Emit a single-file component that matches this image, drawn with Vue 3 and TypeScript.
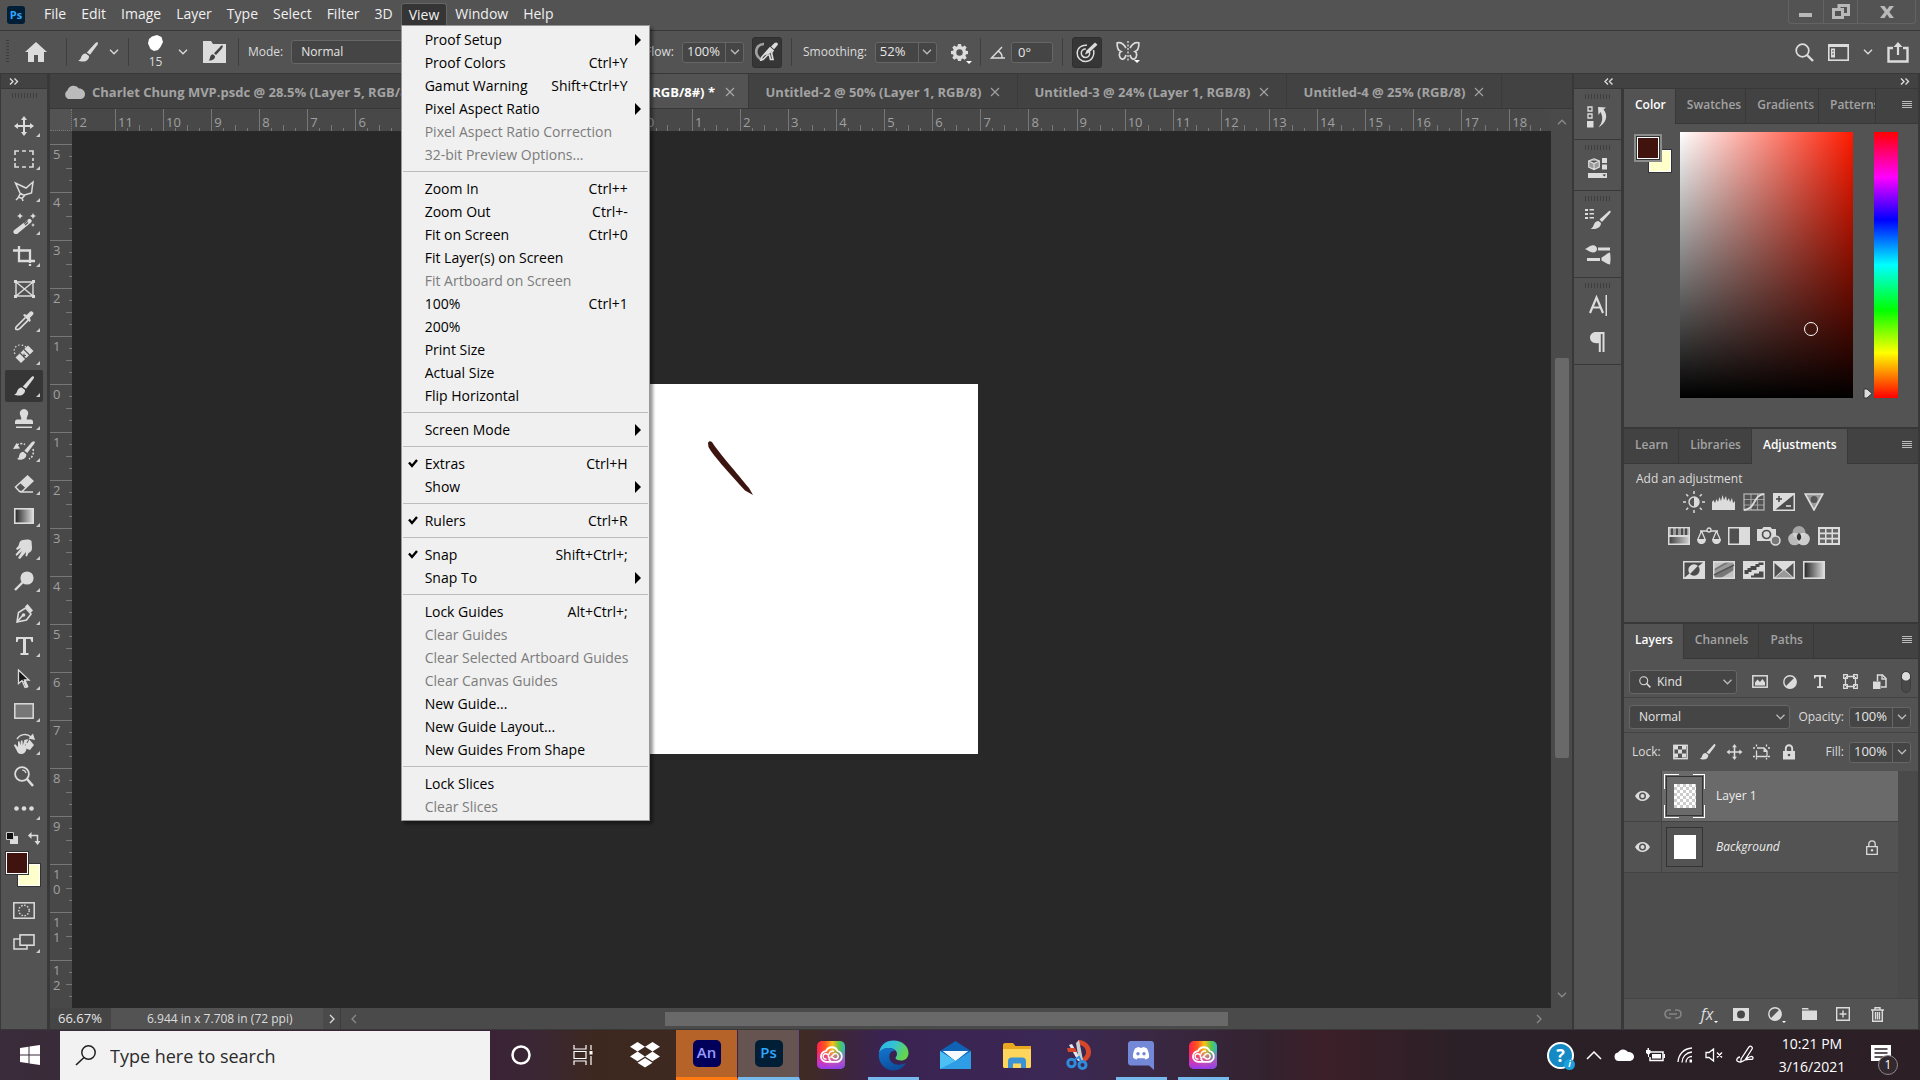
<script setup lang="ts">
import { h, ref } from 'vue'

type IconDef = [number, number, string]

const S = 'fill="none" stroke="currentColor"'

const icons: Record<string, IconDef> = {
  home: [22, 20, '<path d="M11 0L0 10h3v10h6v-7h4v7h6V10h3z"/>'],
  brush: [20, 20, '<path d="M19.500 .3c.8.6.5 1.600 0 2.400L12 12.800 8.800 10.500 17 1.500c.8-.9 1.700-1.700 2.500-1.200zM7.800 11.400l3.200 2.500c.3 3-2.200 5.600-6 5.600-2 0-3.700-.3-4.800-1 2-.6 2.400-1.800 3-3.500.7-2.200 2.400-3.700 4.600-3.600z"/>'],
  blob: [15, 16, '<path d="M4 1.500L9 0l4.500 2L15 7l-2.500 5L10 15l-4 1-3.500-2L0 8.500 1 4z"/>'],
  brushPanel: [23, 22, '<path d="M0 0h8l2 3h13v19H0z"/><path d="M19.500 4.500c.8.7 0 2-1 3.500l-5.500 6-2-1.700L17 6c.8-.9 1.900-2 2.500-1.500zM10 13.300l2 1.700c.3 2.500-1.500 4.500-6.500 4.500 1.500-1 1.200-2 1.700-3.700.4-1.500 1.500-2.500 2.800-2.500z" fill="#444"/>'],
  chev: [10, 6, `<path d="M1 .8l4 4 4-4" ${S} stroke-width="1.300"/>`],
  chevUp: [10, 6, `<path d="M1 5.200l4-4 4 4" ${S} stroke-width="1.300"/>`],
  chevLeft: [6, 10, `<path d="M5 1L1 5l4 4" ${S} stroke-width="1.300"/>`],
  chevRight: [6, 10, `<path d="M1 1l4 4-4 4" ${S} stroke-width="1.300"/>`],
  dblRight: [10, 7, `<path d="M1 .5l3 3-3 3M5.500.5l3 3-3 3" ${S} stroke-width="1.400"/>`],
  dblLeft: [10, 7, `<path d="M4 .5l-3 3 3 3M8.500.5l-3 3 3 3" ${S} stroke-width="1.400"/>`],
  airbrush: [24, 20, `<path d="M9 2C4 2 1.200 5.500 1.200 9.500S4 17 7 17.500" ${S} stroke-width="2.600" opacity=".65"/><path d="M21 .5c1.700 0 2.500 1.700 1.500 2.700l-3.500 4-3-2.700L19.500 1z"/><path d="M15 6l3 2.700-1.500 2L18 17.500h-2.500L14.500 13h-2l-4.500 4.500-2 .5 1-3z" ${S} stroke-width="1.700"/><path d="M14.500 6L9 13.500l6-2 2.500-3z"/>`],
  gear: [17, 17, '<path fill-rule="evenodd" d="M7 0h3l.5 2.300 1.200.5 2-1.300 2 2-1.300 2 .5 1.200L17 7v3l-2.100.5-.5 1.200 1.300 2-2 2-2-1.300-1.200.5L10 17H7l-.5-2.100-1.200-.5-2 1.300-2-2 1.300-2-.5-1.200L0 10V7l2.100-.3.5-1.200-1.300-2 2-2 2 1.300 1.200-.5zM8.500 5.300a3.200 3.200 0 100 6.400 3.200 3.200 0 000-6.400z"/>'],
  angle: [16, 13, `<path d="M15 12H1.500L12 1M8.500 5.500c2.500 1 3.700 3.500 3.500 6.500" ${S} stroke-width="1.400"/>`],
  target: [22, 21, `<path d="M17.500 8c1.500 6-2.500 11.500-8 11.500A8.300 8.300 0 011.200 11c0-5 4.500-8.500 9.800-7.700" ${S} stroke-width="1.500"/><path d="M13.500 10c.8 3-1 5.500-4 5.500A4.300 4.300 0 015.300 11c0-2.500 2-4.200 4.500-4" ${S} stroke-width="1.500"/><path d="M19 .5l2.500 2.300-8.500 8-4 1.700 1.500-4z"/>`],
  butterfly: [24, 22, `<path d="M10 7C7.500 2.500 4 1 1.200 1.800 1 6 2 9.500 5 10.500 2.500 12 3 16.500 5.500 18 8 19 9.500 16 10 14M14 7c2.500-4.500 6-6 8.800-5.200.2 4.200-.8 7.700-3.800 8.700 2.500 1.500 2 6-.5 7.500-2.500 1-4-2-4.500-4" ${S} stroke-width="1.700"/><path d="M12 0v21" stroke="currentColor" stroke-width="1.300" stroke-dasharray="2 1.500"/><path d="M18 19h6l-3 3z" fill="#fff"/>`],
  search: [19, 19, `<circle cx="7.500" cy="7.500" r="6.300" ${S} stroke-width="1.700"/><path d="M12 12l6 6" stroke="currentColor" stroke-width="2.400"/>`],
  workspace: [21, 17, `<rect x=".8" y=".8" width="19.400" height="15.400" ${S} stroke-width="1.600"/><path d="M0 0h21v3H0z"/><path d="M3 4.500h4v9H3z"/><path d="M4 7h2M4 10h2" stroke="#535353"/>`],
  share: [22, 21, `<path d="M6 6H1.500v13.500h19V6H16" ${S} stroke-width="2.400"/><path d="M11 13V3" stroke="currentColor" stroke-width="2.200"/><path d="M11 0l4.500 5h-9z"/>`],
  min: [14, 14, '<path d="M0 8h13v4H0z"/>'],
  restore: [18, 15, `<path d="M1.500 5.500h9v8h-9z" ${S} stroke-width="3"/><path d="M7 4V1.500h9.500v9H12" ${S} stroke-width="3"/>`],
  close: [14, 12, '<path d="M0 0h4.500L7 3.500 9.500 0H14L9.300 6 14 12H9.500L7 8.300 4.500 12H0l4.700-6z"/>'],
  x: [10, 10, `<path d="M1 1l8 8M9 1L1 9" ${S} stroke-width="1.100"/>`],
  cloud: [22, 14, '<path d="M5 14a5 5 0 01-.5-8.800A6.500 6.500 0 0116 3.500c3.500 0 6 2.500 6 5.500s-2 5-5 5z"/>'],
  lines: [10, 8, '<path d="M0 0h10v1H0zM0 2h10v1H0zM0 4h10v1H0zM0 6h10v1H0z"/>'],
  move: [20, 20, '<path d="M10 0l3 4h-2v5h5V7l4 3-4 3v-2h-5v5h2l-3 4-3-4h2v-5H4v2l-4-3 4-3v2h5V4H7z"/>'],
  marquee: [20, 18, `<path d="M1 5V1h4M8 1h4M15 1h4v4M19 8v3M19 13v4h-4M12 17H8M5 17H1v-4M1 11V8" ${S} stroke-width="1.600"/>`],
  lasso: [20, 22, `<path d="M6 13L1.500 3 12 8l7-6-1.500 11-7 2M6.500 13.500l4 2-2.500 3-3.500-1.500zM5 17l-3 3M8 18l1 3" ${S} stroke-width="1.500"/>`],
  wand: [23, 21, `<path d="M15 6.500a2 2 0 013 3L5 20.300a2 2 0 01-4-3z"/><path d="M11 10.500l3.500-3M12 12l3-2.500" stroke="#535353" stroke-width="1.200"/><path d="M7 0l1 2 2 1-2 1-1 2-1-2-2-1 2-1zM20 0l1 2 2 1-2 1-1 2-1-2-2-1 2-1zM20 10l.7 1.500L22 12l-1.300.6L20 14l-.7-1.400L18 12l1.300-.5z"/>`],
  crop: [23, 20, `<path d="M0 4.500h17V17M6 0v15h16M17 18v2" ${S} stroke-width="2.300"/>`],
  frame: [21, 18, `<path d="M2 2h17v14H2zM2 2l17 14M19 2L2 16" ${S} stroke-width="1.400"/><path d="M0 0h3v3H0zM18 0h3v3h-3zM0 15h3v3H0zM18 15h3v3h-3z"/>`],
  eyedrop: [20, 20, `<path d="M11.500 6.500L2.500 15.500c-1.200 1.200-1 3 0 3s2 .3 3.200-.8l8.500-8.500" ${S} stroke-width="1.700"/><path d="M9 4l1.500-1 2 1L16 .8c2-1.500 4.500 1 3 3L15.800 7l1 2.500L15.500 11z"/>`],
  heal: [22, 20, `<path d="M15 1.500l5.500 5.500L8 19l-5.500-5.500z"/><path d="M7 9l6 6M11 5.500l5.500 5.500" stroke="#535353" stroke-width="1.200"/><path d="M9 11.500h4M11 9.500v4" stroke="#535353"/><path d="M2 10C-.5 5 3 1 7 1s5 1 6 2.500" ${S} stroke-width="1.200" stroke-dasharray="1.500 2"/>`],
  stamp: [18, 20, '<path d="M9 0a4.200 4.200 0 014 5.500c-.7 2-1.300 3-1.300 5H16c1 0 2 1 2 2V15H0v-2.500c0-1 1-2 2-2h4.300c0-2-.6-3-1.300-5A4.200 4.200 0 019 0zM1 17.500h16V19H1z"/>'],
  history: [22, 20, `<path d="M21.500.5c.7.7 0 2-1 3.300L14.300 12l-3-2.200L18 2c1-1.200 2.700-2.200 3.500-1.500zM10.300 10.800l3 2.400c.3 3-2 5.500-6.300 5.500-1 0-2.300-.2-3-.7 2-.7 1.800-2 2.300-3.700.5-2 2-3.500 4-3.500zM0 8l3.500-6L7 7.500z"/><path d="M4 4c3-2 6-1.500 8-.5M20 8c1 4 0 8-4 10" ${S} stroke-width="1.500" stroke-dasharray="2 1.500"/>`],
  eraser: [20, 18, `<path d="M13.500 1L19 6 12 12.500 6.500 7.500z"/><path d="M13.500 1L1.500 12 5.500 16.500H8L19 6zM6.500 7.500l5.500 5M6 17h13" ${S} stroke-width="1.500"/>`],
  gradient: [20, 16, '<defs><linearGradient id="gt"><stop stop-color="#222"/><stop offset="1" stop-color="#ddd"/></linearGradient></defs><rect x=".8" y=".8" width="18.400" height="14.400" fill="url(#gt)" stroke="currentColor" stroke-width="1.600"/>'],
  smudge: [18, 20, '<path d="M8 1c3-1 8-.8 8.500 1L17 9c0 3-1.500 4-3.500 5L12 17.500l-1.500-.5.5-4L5 20l-2-1 4-7-5.500 5L.5 15.500 6 9l-4 2-1-1.500C3 8 4 6 4.500 3.500 5 2 6.500 1.300 8 1z"/>'],
  dodge: [20, 20, `<circle cx="13" cy="7" r="6.600"/><path d="M9 11l-8 8" stroke="currentColor" stroke-width="2.400"/>`],
  pen: [18, 20, `<path d="M2 18L3.500 8.500 10.500 4 16 10l-4.500 6zM2 18l6-7" ${S} stroke-width="1.600"/><circle cx="8.500" cy="11" r="1.800"/><path d="M10 2.500L12.500 0 18 6.500 15.500 9z"/>`],
  type: [17, 18, '<path d="M0 0h17v5h-1.500L14.500 2H10v14h2.500v2h-8v-2H7V2H2.500l-1 3H0z"/>'],
  select: [14, 20, '<path d="M1.500 1v13.500l3.500-3 3 7 2.500-1-3-6.500H12z" fill="#151515" stroke="currentColor" stroke-width="1.300"/><path d="M6 12l3 7 2.500-1-3-7z"/>'],
  rect: [20, 16, '<rect x=".8" y=".8" width="18.400" height="14.400" fill="#777" stroke="currentColor" stroke-width="1.500"/>'],
  rotate: [21, 21, `<path d="M3 6C6 1 13 0 17 4" ${S} stroke-width="1.500"/><path d="M14.500 5.500L21 7 19 .5z"/><path d="M10 7l5-1 5 6-4 5-3-1zM1 11l3 3V8.500l1.500-.3.8 4L7 7.500h1.500l.3 5L10 8.300l1.300.5L11 13l1.500-2 1.300.5L12.500 16c-1 4-3 5-5.500 5s-3.500-1.500-4.500-4L0 12.500z"/><path d="M15 6l-2 4" stroke="#535353"/>`],
  zoom: [20, 21, `<circle cx="8" cy="8" r="6.900" ${S} stroke-width="1.800"/><path d="M8 4a4 4 0 014 3" ${S} stroke-width="1.200"/><path d="M13 13l6 7" stroke="currentColor" stroke-width="2.600"/>`],
  dots: [20, 5, '<circle cx="2.500" cy="2.500" r="2.300"/><circle cx="10" cy="2.500" r="2.300"/><circle cx="17.500" cy="2.500" r="2.300"/>'],
  defaults: [12, 12, '<path d="M4 4h8v8H4z" /><path d="M.5.500h7v7h-7z" fill="#111" stroke="#ccc"/>'],
  swap: [12, 13, `<path d="M2 3.500h7.500V11" ${S} stroke-width="1.500"/><path d="M3.500 0v7L0 3.500zM6.500 9h6l-3 4z"/>`],
  quickmask: [22, 17, `<rect x=".8" y=".8" width="20.400" height="15.400" ${S} stroke-width="1.500"/><circle cx="11" cy="8.500" r="5.200" ${S} stroke-width="1.400" stroke-dasharray="1.500 1.500"/>`],
  screen: [22, 16, `<path d="M7 5H1v10h13v-4" ${S} stroke-width="1.500"/><rect x="7" y=".9" width="14" height="10.300" ${S} stroke-width="1.600"/>`],
  hist: [22, 22, `<path d="M1 1h4v4H1zM1 8h4v4H1z" ${S} stroke-width="1.300"/><path d="M0 15h6.500v6.500H0zM11 1l8 .5-2.500 2c5 6 3 13-5 18 4-5 5-10 2-15.500L11.500 9z"/>`],
  cube: [20, 21, `<path d="M6 .8l5.300 2.200v6L6 11.500.7 9V3zM.7 3L6 5.500 11.300 3M6 5.500v6" fill="#999" stroke="currentColor" stroke-width="1.200"/><path d="M14 0h5v5h-5zM14 6.500h5v5h-5zM0 15h19v5H0z"/><path d="M14.500 16.500h3.500L16.300 18.500z" fill="#333"/>`],
  brushList: [26, 22, '<path d="M0 1h3v2H0zM4.500 1H9v1.500H4.500zM0 5h3v2H0zM4.500 5H9v1.500H4.500zM0 9h3v2H0zM4.500 9H9v1.500H4.500zM25.500 3c.5.700-.2 2-1.200 3L17 14l-2.500-2.500L23 4c.8-.7 2-1.500 2.500-1zM13.500 13l2.500 2c0 4-3.500 6.500-10.500 6 2.500-1.200 2.500-2.800 3.500-4.800 1-2 2.500-3.200 4.500-3.200z"/>'],
  brushSet: [26, 20, '<path d="M0 4C3 3 5 0 8 .2c2.500 0 4 1.800 4 3.800S10.500 7.500 8 7.500C5 7.500 3 5 0 4zM13 2.500h12v3H13zM2 13h13v3H2zM25 7.500c.7 4 .7 8 0 12-3-.3-5-2.500-8.500-4v-3C20 11 22 8 25 7.500z"/>'],
  char: [18, 22, `<path d="M1 18L7.500 2.500 14 18M3.500 12.500h8" ${S} stroke-width="2.200"/><path d="M16.500 0h1.500v21h-1.500z"/>`],
  para: [15, 20, '<path d="M14.500 0v20h-2V2h-1.700v18h-2V11C3 12 0 9 0 5.500S3 0 6.500 0z"/>'],
  bright: [22, 22, `<circle cx="11" cy="11" r="5" ${S} stroke-width="1.400"/><path d="M11 6a5 5 0 010 10z"/><path d="M11 0v3M11 19v3M0 11h3M19 11h3M3.200 3.200l2 2M16.800 16.800l2 2M3.200 18.800l2-2M16.800 5.200l2-2" stroke="currentColor" stroke-width="1.500"/>`],
  levels: [23, 15, '<path d="M0 15V7l1.500-2L3 8l1.500-4L6 7l1.500-5L9 6l1.500-6L12 5l2-4 1 5 2-3 1 4 2-4 1 5 2-2v9z"/>'],
  curves: [22, 18, `<rect x="1" y="1" width="20" height="16" ${S} stroke-width="1.500" opacity=".6"/><path d="M8 1v16M14.500 1v16M1 6.500h20M1 12h20" stroke="currentColor" stroke-width="1.200" opacity=".55"/><path d="M1 17C13 16 10 2 21 1" ${S} stroke-width="1.800"/>`],
  exposure: [22, 18, `<path d="M0 0h22v18H0z"/><path d="M20.500 2v14.500h-18z" fill="#4c4c4c"/><path d="M3 6h6M6 3v6" stroke="#444" stroke-width="1.500"/><path d="M13 13h5" stroke="currentColor" stroke-width="1.600"/>`],
  vibrance: [20, 18, `<path d="M1.200 1h17.600L10 17z" fill="#9a9a9a" stroke="currentColor" stroke-width="1.600"/><circle cx="10" cy="6.500" r="3.500" fill="#555"/>`],
  hue: [22, 18, '<defs><linearGradient id="hg"><stop stop-color="#444"/><stop offset="1" stop-color="#ccc"/></linearGradient></defs><path d="M0 0h22v18H0z"/><path d="M1.500 1.500h19V8h-19z" fill="#999"/><path d="M3 1.500h2V8H3zM8 1.500h2V8H8zM13 1.500h2V8h-2zM17 1.500h2V8h-2z" fill="#4a4a4a"/><path d="M1.500 10h19v6.500h-19z" fill="url(#hg)"/>'],
  balance: [24, 18, `<circle cx="12" cy="3" r="2" ${S} stroke-width="1.300"/><path d="M3 4h7M14 4h7M4.500 4L1 12M4.500 4L8 12M19.500 4L16 12M19.500 4L23 12" ${S} stroke-width="1.300"/><path d="M0 12h9c0 3-2 5-4.500 5S0 15 0 12zM15 12h9c0 3-2 5-4.500 5S15 15 15 12z"/>`],
  bw: [22, 18, '<path d="M0 0h22v18H0z"/><path d="M1.500 1.500H11v15H1.500z" fill="#505050"/>'],
  photo: [24, 20, `<path d="M0 3h5l1.500-2h7L15 3h4v9.500L15 15H0z"/><circle cx="9.500" cy="8.500" r="4" fill="none" stroke="#505050" stroke-width="1.700"/><circle cx="18.500" cy="14.500" r="4.500" fill="#777" stroke="currentColor" stroke-width="1.500"/>`],
  mixer: [22, 20, '<circle cx="11" cy="6.500" r="6.500" opacity=".6"/><circle cx="6.500" cy="13" r="6.300" opacity=".75"/><circle cx="15.500" cy="13" r="6.300" opacity=".9"/><path d="M11 7c2 1.500 2.500 3 2 5.500L11 15l-2-2.500C8.500 10 9 8.500 11 7z" fill="#333"/>'],
  lookup: [22, 18, '<path d="M0 0h22v18H0z"/><path d="M2 2h5v3.500H2zM8.500 2h5v3.500h-5zM15 2h5v3.500h-5zM2 7.200h5v3.500H2zM8.500 7.200h5v3.500h-5zM15 7.200h5v3.500h-5zM2 12.500h5V16H2zM8.500 12.500h5V16h-5zM15 12.500h5V16h-5z" fill="#666"/>'],
  invert: [22, 18, '<path d="M0 0h22v18H0z"/><path d="M1.500 1.500H20L1.500 16.500z" fill="#4c4c4c"/><path d="M7 13A5.500 5.500 0 0115 5z"/><path d="M7 13a5.500 5.500 0 008-8z" fill="#4c4c4c"/>'],
  poster: [22, 18, `<rect x=".8" y=".8" width="20.400" height="16.400" fill="#777" stroke="currentColor" stroke-width="1.600"/><path d="M1 10L17 1h4v3L1 15z" opacity=".35"/><path d="M1 8L13 1H1zM8 17l13-8v8z" opacity=".75"/><path d="M1 14L21 4" stroke="#555" stroke-width="1.500"/>`],
  threshold: [22, 18, '<path d="M0 0h22v18H0z"/><path d="M1.500 9h3V7h3V5h5V3h3V1.500h5V4h-4v2h-3v3h-5v2h-3v2h-4zM8 16.500v-2h3v-2h5v-2h4.500v6z" fill="#484848"/>'],
  selective: [22, 18, '<path d="M0 0h22v18H0z"/><path d="M1.500 2v14.500L9.500 9zM20.500 2v14.500L12.500 9z" fill="#505050"/><path d="M2.500 16.500L11 9l8.500 7.500z" fill="#999"/>'],
  gmap: [22, 18, '<rect x=".8" y=".8" width="20.400" height="16.400" fill="url(#gt)" stroke="currentColor" stroke-width="1.600"/>'],
  fImage: [16, 13, `<rect x=".8" y=".8" width="14.400" height="11.400" ${S} stroke-width="1.500"/><path d="M3 10.500v-3l2.500-3L8 7l2.500-3L13 7.500v3z"/>`],
  fAdj: [14, 14, `<circle cx="7" cy="7" r="6.200" ${S} stroke-width="1.400"/><path d="M11.500 2.500A6.300 6.300 0 012.500 11.500z"/>`],
  fType: [12, 13, '<path d="M0 0h12v3.500h-1L10 1.700H7v9.600h2V13H3v-1.700h2V1.700H2L1 3.500H0z"/>'],
  fShape: [15, 15, `<path d="M3 2.500h9M3 12.500h9M2.500 3v9M12.500 3v9" ${S} stroke-width="1.300"/><path d="M.7.7h3.600v3.600H.7zM10.700.7h3.600v3.600h-3.600zM.7 10.700h3.600v3.600H.7zM10.700 10.700h3.600v3.600h-3.600z" ${S} stroke-width="1.300"/>`],
  fSmart: [14, 15, `<path d="M4.500 7V1h5L13 4.500V13H8" ${S} stroke-width="1.500"/><path d="M9 1v4h4" ${S} stroke-width="1.300"/><path d="M0 7.500h7.500V15H0z"/>`],
  lPix: [15, 15, `<rect x=".8" y=".8" width="13.400" height="13.400" ${S} stroke-width="1.400"/><path d="M1 1h4v4H1zM9 1h4v4H9zM5 5h4v4H5zM1 9h4v4H1zM9 9h4v4H9z"/>`],
  lArt: [17, 15, `<path d="M3.500 0v2M0 3.500h2M4 3.500h7l3 3V12H3.500V6M3.500 13v2M0 12h2M13.500 13.500V15M15 12h2M15 3.500h2M13.500 0v2" ${S} stroke-width="1.300"/><path d="M10.500 3.500v4h4z"/>`],
  lock: [12, 15, `<path d="M0 6.500h12V15H0z"/><path d="M2.800 7V4a3.200 3.200 0 016.400 0v3" ${S} stroke-width="1.900"/><circle cx="6" cy="10.500" r="1.300" fill="#535353"/>`],
  lockO: [12, 15, `<path d="M.7 6.700h10.600v7.600H.7zM2.800 6.700V4a3.200 3.200 0 016.400 0v2.700" ${S} stroke-width="1.300"/><circle cx="6" cy="10.300" r="1.200"/>`],
  eye: [15, 10, '<path fill-rule="evenodd" d="M0 5c2-3.300 4.500-5 7.500-5S13 1.700 15 5c-2 3.300-4.500 5-7.500 5S2 8.300 0 5zm7.500-3.500a3.500 3.500 0 100 7 3.500 3.500 0 000-7z"/><circle cx="7.500" cy="5" r="2"/>'],
  link: [18, 10, `<path d="M7 9H5a4 4 0 010-8h2M11 1h2a4 4 0 010 8h-2M5 5h8" ${S} stroke-width="1.700"/>`],
  mask: [16, 13, '<path d="M0 0h16v13H0z"/><circle cx="8" cy="6.500" r="4" fill="#484848"/>'],
  folder: [15, 12, '<path d="M0 0h6l1 1.500H0zM0 2.500h15V12H0z"/>'],
  plus: [14, 14, `<path d="M.7.7h12.600v12.600H.7zM7 3.500v7M3.500 7h7" ${S} stroke-width="1.400"/>`],
  trash: [13, 15, `<path d="M0 3h13M4 2.500V.7h5v1.800M1.700 3v11.300h9.600V3M4.500 5v7.500M6.500 5v7.500M8.500 5v7.500" ${S} stroke-width="1.400"/>`],
  win: [20, 20, '<path d="M0 3l8.500-1.200v7.700H0zM9.500 1.600L20 0v9.500H9.500zM0 10.500h8.500v7.700L0 17zM9.500 10.500H20V20L9.500 18.400z"/>'],
  mag: [22, 21, `<circle cx="13.500" cy="7.500" r="6.700" ${S} stroke-width="1.500"/><path d="M9 12.500L1 20" ${S} stroke-width="1.700"/>`],
  ring: [20, 20, `<circle cx="10" cy="10" r="8.500" ${S} stroke-width="2.500"/>`],
  taskview: [21, 20, `<path d="M1 0v4h12V0M1 20v-4h12v4M1 6.500h12v7H1zM18 0v5M18 11v9" ${S} stroke-width="1.200"/><path d="M16.500 6h3v3.500h-3z"/>`],
  dropbox: [30, 26, '<path d="M7.500 0L15 4.800 7.500 9.600 0 4.800zM22.500 0L30 4.800l-7.500 4.800L15 4.800zM7.500 9.600L15 14.400 7.500 19.200 0 14.400zM22.500 9.600l7.500 4.800-7.500 4.800-7.500-4.800zM7.500 20.700L15 16l7.500 4.700L15 25.500z"/>'],
  cc: [28, 28, '<defs><linearGradient id="cca"><stop stop-color="#ff1f4e"/><stop offset=".3" stop-color="#ff5a1e"/><stop offset=".55" stop-color="#fbc01c"/><stop offset=".8" stop-color="#57c94c"/><stop offset="1" stop-color="#2fb5c8"/></linearGradient><linearGradient id="ccb" x1="0" y1="0" x2="0" y2="1"><stop offset=".3" stop-color="#d62ad0" stop-opacity="0"/><stop offset=".75" stop-color="#c436d8" stop-opacity=".8"/><stop offset="1" stop-color="#8f3df0"/></linearGradient></defs><rect width="28" height="28" rx="5" fill="url(#cca)"/><rect width="28" height="28" rx="5" fill="url(#ccb)"/><path d="M18 20.800H9.500A5.300 5.300 0 019 10.200 6.300 6.300 0 0120.600 10 5.500 5.500 0 0118 20.800z" fill="none" stroke="#fff" stroke-width="1.800"/><path d="M13 17.500l-1.500-1.800a2.700 2.700 0 10-2 2.300M12 13.500a3.500 3.500 0 015-3.200M14 20.500l-2.500-3M13.500 16.500l3-3a2.700 2.700 0 112 4.500c-1.500 0-2.500-1-3.500-2" fill="none" stroke="#fff" stroke-width="1.500"/>'],
  edge: [31, 31, '<defs><linearGradient id="ea" x1="0" y1="0" x2="1" y2=".4"><stop stop-color="#2ab5ea"/><stop offset=".5" stop-color="#35c1d8"/><stop offset="1" stop-color="#63d64c"/></linearGradient><linearGradient id="eb" x1="0" y1="0" x2=".4" y2="1"><stop stop-color="#1277cf"/><stop offset="1" stop-color="#0d4f9e"/></linearGradient></defs><path d="M1 13C2 5 8 .5 15.500.5 24 .5 30.500 6 30.500 13c0 5-3.500 7.500-7.500 7.500-3 0-5.500-1-5.500-2.500 0-1 1.500-1.500 1.500-4 0-3.500-3.500-6-8-6S2.500 10 1 13z" fill="url(#ea)"/><path d="M1 13c2-4 6-5 10-5 3 0 5 1 6.500 2.500-6 0-7.500 6-5 10.500C15 25 21 26 28 23c-2.500 4.500-7 7.500-12.500 7.500C7 30.500-.5 22.500 1 13z" fill="url(#eb)"/>'],
  mail: [31, 28, '<path d="M15.500 0L31 10v18H0V10z" fill="#0f62b4"/><path d="M3 10h25L15.500 20z" fill="#f4f9fd"/><path d="M0 10l15.500 10L31 10v18H0z" fill="#2f9de6"/><path d="M0 10l15.500 10L0 28z" fill="#4cc0f5"/><path d="M3 10h25L15.500 19.500z" fill="#f4f9fd"/>'],
  files: [28, 25, '<path d="M0 2c0-1 .7-2 2-2h8l2.500 3H28v20H0z" fill="#e9a820"/><path d="M0 6h28v17.500c0 .8-.7 1.500-1.500 1.500h-25C.7 25 0 24.300 0 23.500z" fill="#ffd65c"/><path d="M5 25v-7c0-2 1.500-3.500 3.500-3.500h11c2 0 3.500 1.500 3.500 3.500v7h-5v-4.500h-8V25z" fill="#3b92d4"/>'],
  snip: [26, 30, '<path d="M12 0c8 0 13 6 13 12s-5 11-11 11l-1-4c4 0 7-3 7-7s-3-7-7-7z" fill="#d9472b"/><path d="M13 0l4 20-4 1-3-18z" fill="#c9ced3"/><path d="M3 5l3-1 9 16-3 1z" fill="#e6e9ec"/><path d="M1 8h8l2 4H2z" fill="#d9472b"/><circle cx="5.500" cy="23" r="3.700" fill="none" stroke="#2f8bdc" stroke-width="3"/><circle cx="16.500" cy="25" r="3.500" fill="none" stroke="#2f8bdc" stroke-width="3"/><path d="M8 20l5-3 2 4" fill="none" stroke="#2f8bdc" stroke-width="2"/>'],
  discord: [26, 29, '<path d="M3 0h20c1.700 0 3 1.300 3 3v26l-5-4.500H3c-1.700 0-3-1.300-3-3V3c0-1.700 1.300-3 3-3z" fill="#7488d8"/><path d="M7 7.500c2-1.500 4-1.500 4-1.500l.5.700h3L15 6s2 0 4 1.500c1.500 3 2.300 6 2 9-1.500 1.500-3.500 2-3.500 2l-1-1.300h-7l-1 1.300s-2-.5-3.500-2c-.3-3 .5-6 2-9z" fill="#fff"/><circle cx="10" cy="12.800" r="1.700" fill="#7488d8"/><circle cx="16" cy="12.800" r="1.700" fill="#7488d8"/>'],
  tUp: [16, 9, `<path d="M1 8l7-7 7 7" ${S} stroke-width="1.500"/>`],
  tCloud: [20, 12, '<path d="M4.500 12a4.300 4.300 0 01-.5-8.500A6 6 0 0114 3c3.500 0 6 2 6 4.800S17.500 12 15.500 12z"/>'],
  tBatt: [19, 14, `<path d="M4 4h13v8.500H4V9" ${S} stroke-width="1.500"/><path d="M6 6h9v4.500H6zM17.500 6H19v4h-1.500zM0 2h1.500V0H3v2h1.500v3L3 6.500V9H2V6.500L0 5z"/>`],
  tWifi: [16, 16, `<path d="M1 15C1.500 7 7 1.500 15 1M5 15.500C5 10 9 5.500 15 5M9 15.500c0-3.500 2.500-6 6-6" ${S} stroke-width="1.300"/><path d="M12.500 12.500H15V15.500h-2.500z"/>`],
  tVol: [19, 14, `<path d="M1 4.500h3L8.500 1v12L4 9.500H1zM12 4.500l5 5M17 4.500l-5 5" ${S} stroke-width="1.300"/>`],
  tPen: [19, 20, `<path d="M5 14L13 2c1.500-2 4 0 3 2L9 15l-4 2zM9 15c3-3 8-5 8-2s-5 0-7 2M5 17c-3 0-5-1-4-3s3-2 3-2" ${S} stroke-width="1.300"/>`],
  note: [22, 20, '<path d="M0 0h20v16h-7l-4 4v-4H0z"/><path d="M3.500 4h13M3.500 8h13M3.500 12h9" stroke="#2a1f26" stroke-width="1.500"/>'],
}

const Ico = (props: { name: string }) => {
  const [w, ht, body] = icons[props.name]
  return h('svg', {
    width: w,
    height: ht,
    viewBox: `0 0 ${w} ${ht}`,
    fill: 'currentColor',
    'aria-hidden': 'true',
    innerHTML: body,
  })
}
Ico.props = ['name']

const menusBefore = ['File', 'Edit', 'Image', 'Layer', 'Type', 'Select', 'Filter', '3D']
const menusAfter = ['Window', 'Help']

interface Item { label: string; key?: string; sub?: boolean; off?: boolean; on?: boolean }

const viewMenu: Item[][] = [
  [
    { label: 'Proof Setup', sub: true },
    { label: 'Proof Colors', key: 'Ctrl+Y' },
    { label: 'Gamut Warning', key: 'Shift+Ctrl+Y' },
    { label: 'Pixel Aspect Ratio', sub: true },
    { label: 'Pixel Aspect Ratio Correction', off: true },
    { label: '32-bit Preview Options...', off: true },
  ],
  [
    { label: 'Zoom In', key: 'Ctrl++' },
    { label: 'Zoom Out', key: 'Ctrl+-' },
    { label: 'Fit on Screen', key: 'Ctrl+0' },
    { label: 'Fit Layer(s) on Screen' },
    { label: 'Fit Artboard on Screen', off: true },
    { label: '100%', key: 'Ctrl+1' },
    { label: '200%' },
    { label: 'Print Size' },
    { label: 'Actual Size' },
    { label: 'Flip Horizontal' },
  ],
  [{ label: 'Screen Mode', sub: true }],
  [{ label: 'Extras', key: 'Ctrl+H', on: true }, { label: 'Show', sub: true }],
  [{ label: 'Rulers', key: 'Ctrl+R', on: true }],
  [{ label: 'Snap', key: 'Shift+Ctrl+;', on: true }, { label: 'Snap To', sub: true }],
  [
    { label: 'Lock Guides', key: 'Alt+Ctrl+;' },
    { label: 'Clear Guides', off: true },
    { label: 'Clear Selected Artboard Guides', off: true },
    { label: 'Clear Canvas Guides', off: true },
    { label: 'New Guide...' },
    { label: 'New Guide Layout...' },
    { label: 'New Guides From Shape' },
  ],
  [{ label: 'Lock Slices' }, { label: 'Clear Slices', off: true }],
]

const docs = [
  { title: 'Charlet Chung MVP.psdc @ 28.5% (Layer 5, RGB/8)', kind: 'cloud' },
  { title: 'Untitled-1 @ 66.7% (Layer 1, RGB/8#) *', kind: 'active' },
  { title: 'Untitled-2 @ 50% (Layer 1, RGB/8)', kind: 'wide' },
  { title: 'Untitled-3 @ 24% (Layer 1, RGB/8)', kind: 'wide' },
  { title: 'Untitled-4 @ 25% (RGB/8)', kind: 'short' },
]

const hLabels = Array.from({ length: 30 }, (_, i) => Math.abs(i - 11))
const vLabels = Array.from({ length: 18 }, (_, i) => String(Math.abs(i - 5)).split(''))

const tools = [
  'move', 'marquee', 'lasso', 'wand', 'crop', 'frame', 'eyedrop', 'heal', 'brush', 'stamp', 'history',
  'eraser', 'gradient', 'smudge', 'dodge', 'pen', 'type', 'select', 'rect', 'rotate', 'zoom', 'dots',
]
const noFlyout = new Set(['frame', 'zoom'])

const dock = [['hist'], ['cube'], ['brushList', 'brushSet'], ['char', 'para']]

const adjustments = [
  ['bright', 'levels', 'curves', 'exposure', 'vibrance'],
  ['hue', 'balance', 'bw', 'photo', 'mixer', 'lookup'],
  ['invert', 'poster', 'threshold', 'selective', 'gmap'],
]

const hue = ref(5)
const flow = ref('100%')
const smoothing = ref('52%')
const angle = ref('0°')
const opacity = ref('100%')
const fill = ref('100%')
const filterOn = ref(true)
</script>

<template>
  <div class="app">
    <header class="menubar">
      <span class="ps">Ps</span>
      <nav class="menus">
        <button v-for="m in menusBefore" :key="m" class="menu">{{ m }}</button>
        <div class="open">
          <button class="menu current">View</button>
          <div class="dropdown" role="menu">
            <div v-for="(group, gi) in viewMenu" :key="gi" class="group">
              <button v-for="it in group" :key="it.label" class="item" :disabled="it.off" role="menuitem">
                <span class="tick"><svg v-if="it.on" width="10" height="9" viewBox="0 0 10 9"><path d="M1 3.500L4 7l5-6" fill="none" stroke="#000" stroke-width="2.400" /></svg></span>
                <span class="label">{{ it.label }}</span>
                <span v-if="it.key" class="key">{{ it.key }}</span>
                <svg v-if="it.sub" class="sub" width="6" height="12" viewBox="0 0 6 12"><path d="M0 0l6 6-6 6z" /></svg>
              </button>
            </div>
          </div>
        </div>
        <button v-for="m in menusAfter" :key="m" class="menu">{{ m }}</button>
      </nav>
      <div class="winctl">
        <button aria-label="Minimize"><Ico name="min" /></button>
        <button aria-label="Restore"><Ico name="restore" /></button>
        <button class="wide" aria-label="Close"><Ico name="close" /></button>
      </div>
    </header>

    <div class="options">
      <div class="og home"><i class="vgrip"></i><button aria-label="Home"><Ico name="home" /></button></div>
      <div class="og brushes"><button aria-label="Brush tool"><Ico name="brush" /></button><button aria-label="Presets"><Ico name="chev" /></button></div>
      <div class="og tip">
        <button class="size"><Ico name="blob" /><span>15</span></button>
        <button aria-label="Brush picker"><Ico name="chev" /></button>
        <button aria-label="Brush settings"><Ico name="brushPanel" /></button>
      </div>
      <div class="og mode">
        <label for="mode">Mode:</label>
        <select id="mode" class="field grow"><option>Normal</option></select>
        <label for="flow">Flow:</label>
        <span class="combo"><input id="flow" v-model="flow" type="text"><button aria-label="Flow options"><Ico name="chev" /></button></span>
        <button class="toggle" aria-label="Airbrush"><Ico name="airbrush" /></button>
      </div>
      <div class="og smooth">
        <label for="smoothing">Smoothing:</label>
        <span class="combo"><input id="smoothing" v-model="smoothing" type="text"><button aria-label="Smoothing options"><Ico name="chev" /></button></span>
        <button class="gear" aria-label="Smoothing settings"><Ico name="gear" /></button>
      </div>
      <div class="og angle">
        <label for="angle" aria-label="Angle"><Ico name="angle" /></label>
        <input id="angle" v-model="angle" class="field angle-in" type="text">
      </div>
      <div class="og last">
        <button class="toggle" aria-label="Pressure for size"><Ico name="target" /></button>
        <button aria-label="Symmetry"><Ico name="butterfly" /></button>
      </div>
      <div class="right-tools">
        <button aria-label="Search"><Ico name="search" /></button>
        <button aria-label="Workspace"><Ico name="workspace" /></button>
        <button aria-label="Choose workspace"><Ico name="chev" /></button>
        <button aria-label="Share"><Ico name="share" /></button>
      </div>
    </div>

    <main class="work">
      <aside class="toolbar">
        <div class="strip"><Ico name="dblRight" /></div>
        <div class="toolbody">
          <i class="hgrip"></i>
          <div class="tools">
            <button v-for="t in tools" :key="t" class="tool" :class="{ sel: t === 'brush', fly: !noFlyout.has(t) }" :aria-label="t"><Ico :name="t" /></button>
          </div>
          <div class="mini"><Ico name="defaults" /><Ico name="swap" /></div>
          <div class="swatches"><button class="bg" aria-label="Background color"></button><button class="fg" aria-label="Foreground color"></button></div>
          <button class="tool" aria-label="Quick mask"><Ico name="quickmask" /></button>
          <button class="tool fly" aria-label="Screen mode"><Ico name="screen" /></button>
        </div>
      </aside>

      <section class="document">
        <div class="tabs" role="tablist">
          <button v-for="d in docs" :key="d.title" class="doctab" :class="d.kind" role="tab">
            <Ico v-if="d.kind === 'cloud'" name="cloud" />
            <span>{{ d.title }}</span>
            <Ico v-if="d.kind !== 'cloud'" name="x" />
          </button>
        </div>
        <div class="stage">
          <div class="corner"></div>
          <div class="hruler"><span class="first">12</span><span v-for="(n, i) in hLabels" :key="i" class="cell">{{ n }}</span></div>
          <div class="vscroll">
            <Ico name="chevUp" /><i class="thumb"></i><Ico name="chev" />
          </div>
          <div class="vruler">
            <span class="lead"></span>
            <span v-for="(n, i) in vLabels" :key="i" class="cell"><b v-for="(c, j) in n" :key="j">{{ c }}</b></span>
          </div>
          <div class="canvas">
            <div class="paper">
              <svg class="stroke" width="48" height="58" viewBox="0 0 48 58"><path d="M1 3c1-2.500 3.500-2 5 .5C12 13 30 33 42 48l4 7-8-4.500C25 36 7 17 1.500 7z" fill="#3d1510" /></svg>
            </div>
          </div>
        </div>
        <div class="status">
          <span class="pct">66.67%</span>
          <span class="dims">6.944 in x 7.708 in (72 ppi)</span>
          <button class="more" aria-label="Status info"><Ico name="chevRight" /></button>
          <div class="hscroll"><Ico name="chevLeft" /><div class="track"><i></i></div><Ico name="chevRight" /></div>
        </div>
      </section>

      <aside class="dock">
        <div class="strip end"><Ico name="dblLeft" /></div>
        <div v-for="(g, i) in dock" :key="i" class="dockgroup">
          <i class="hgrip"></i>
          <button v-for="n in g" :key="n" :aria-label="n"><Ico :name="n" /></button>
        </div>
        <div class="dockrest"></div>
      </aside>

      <aside class="panels">
        <div class="strip end"><Ico name="dblRight" /></div>

        <section class="panel color">
          <div class="ptabs">
            <button class="active">Color</button><button>Swatches</button><button>Gradients</button><button class="clip">Patterns</button>
            <span class="pmenu"><Ico name="lines" /></span>
          </div>
          <div class="colorbody">
            <div class="swatches ring"><button class="bg" aria-label="Background"></button><button class="fg" aria-label="Foreground"></button></div>
            <div class="field2d"><i class="pick"></i></div>
            <div class="huebar">
              <input v-model="hue" type="range" min="0" max="360" aria-label="Hue">
              <svg class="pointer" width="10" height="11" viewBox="0 0 10 11"><path d="M1 1h3l5 4.500L4 10H1z" fill="#ddd" stroke="#333" /></svg>
            </div>
          </div>
        </section>

        <section class="panel adjust">
          <div class="ptabs">
            <button>Learn</button><button>Libraries</button><button class="active">Adjustments</button>
            <span class="pmenu"><Ico name="lines" /></span>
          </div>
          <p>Add an adjustment</p>
          <div class="adjgrid">
            <div v-for="(row, i) in adjustments" :key="i" class="adjrow">
              <button v-for="a in row" :key="a" :aria-label="a"><Ico :name="a" /></button>
            </div>
          </div>
        </section>

        <section class="panel layers">
          <div class="ptabs">
            <button class="active">Layers</button><button>Channels</button><button>Paths</button>
            <span class="pmenu"><Ico name="lines" /></span>
          </div>
          <div class="lrow">
            <span class="kind"><Ico name="search" /><select class="field" aria-label="Filter kind"><option>Kind</option></select></span>
            <div class="filters">
              <button v-for="f in ['fImage', 'fAdj', 'fType', 'fShape', 'fSmart']" :key="f" :aria-label="f"><Ico :name="f" /></button>
            </div>
            <input v-model="filterOn" class="switch" type="checkbox" aria-label="Layer filtering">
          </div>
          <div class="lrow">
            <select class="field blend" aria-label="Blend mode"><option>Normal</option></select>
            <label for="opacity">Opacity:</label>
            <span class="combo"><input id="opacity" v-model="opacity" type="text"><button aria-label="Opacity slider"><Ico name="chev" /></button></span>
          </div>
          <div class="lrow locks">
            <span class="locklabel">Lock:</span>
            <div class="lockbtns">
              <button v-for="f in ['lPix', 'brush', 'move', 'lArt', 'lock']" :key="f" :aria-label="f"><Ico :name="f" /></button>
            </div>
            <label for="fill">Fill:</label>
            <span class="combo"><input id="fill" v-model="fill" type="text"><button aria-label="Fill slider"><Ico name="chev" /></button></span>
          </div>
          <div class="list">
            <div class="layer on">
              <button class="eye" aria-label="Toggle Layer 1"><Ico name="eye" /></button>
              <div class="info"><span class="thumb corners"><i class="checker"></i></span><span>Layer 1</span></div>
            </div>
            <div class="layer">
              <button class="eye" aria-label="Toggle Background"><Ico name="eye" /></button>
              <div class="info"><span class="thumb"><i></i></span><em>Background</em><Ico class="lk" name="lockO" /></div>
            </div>
          </div>
          <div class="lfoot">
            <button class="dim" aria-label="Link"><Ico name="link" /></button>
            <button class="fx drop">fx</button>
            <button aria-label="Mask"><Ico name="mask" /></button>
            <button class="drop" aria-label="Adjustment layer"><Ico name="fAdj" /></button>
            <button aria-label="Group"><Ico name="folder" /></button>
            <button aria-label="New layer"><Ico name="plus" /></button>
            <button aria-label="Delete"><Ico name="trash" /></button>
          </div>
        </section>
      </aside>
    </main>

    <footer class="taskbar">
      <button class="start" aria-label="Start"><Ico name="win" /></button>
      <label class="find"><Ico name="mag" /><input type="text" placeholder="Type here to search" aria-label="Search"></label>
      <button class="task" aria-label="Cortana"><Ico name="ring" /></button>
      <button class="task" aria-label="Task view"><Ico name="taskview" /></button>
      <button class="task" aria-label="Dropbox"><Ico name="dropbox" /></button>
      <button class="task an"><span>An</span></button>
      <button class="task psd"><span>Ps</span></button>
      <button class="task" aria-label="Creative Cloud"><Ico name="cc" /></button>
      <button class="task run" aria-label="Edge"><Ico name="edge" /></button>
      <button class="task" aria-label="Mail"><Ico name="mail" /></button>
      <button class="task" aria-label="Files"><Ico name="files" /></button>
      <button class="task" aria-label="Snip"><Ico name="snip" /></button>
      <button class="task run" aria-label="Discord"><Ico name="discord" /></button>
      <button class="task run" aria-label="Creative Cloud"><Ico name="cc" /></button>
      <div class="tray">
        <span class="help">?<i>i</i></span>
        <Ico name="tUp" /><Ico name="tCloud" /><Ico name="tBatt" /><Ico name="tWifi" /><Ico name="tVol" /><Ico name="tPen" />
      </div>
      <div class="clock"><span>10:21 PM</span><span>3/16/2021</span></div>
      <button class="notes" aria-label="Notifications"><Ico name="note" /><b>1</b></button>
    </footer>
  </div>
</template>

<style>
body {
  margin: 0;
  background: #282828;
}
</style>

<style scoped>
* {
  box-sizing: border-box;
}
.app {
  display: flex;
  flex-direction: column;
  height: 100vh;
  overflow: hidden;
  background: #535353;
  color: #dcdcdc;
  font: 12px/16px "Open Sans", "Noto Sans", sans-serif;
}
button {
  padding: 0;
  border: 0;
  background: none;
  color: inherit;
  font: inherit;
  display: flex;
  align-items: center;
  justify-content: center;
  white-space: nowrap;
}
input,
select {
  min-width: 0;
  color: #e6e6e6;
  font: inherit;
  outline: none;
}
svg {
  display: block;
  flex: none;
}
i {
  display: block;
}

/* menu bar */
.menubar {
  display: flex;
  flex: none;
  height: 31px;
  padding-left: 7px;
  border-bottom: 1px solid #383838;
}
.ps {
  width: 18px;
  height: 18px;
  margin: 6px 12px 0 0;
  border-radius: 3px;
  background: #001e36;
  color: #31a8ff;
  font-weight: 700;
  font-size: 11px;
  line-height: 17px;
  text-align: center;
}
.menus {
  display: flex;
  gap: 1px;
  height: 22px;
  margin-top: 3px;
}
.menu {
  height: 22px;
  padding: 0 7px;
  color: #f0f0f0;
  font-size: 14px;
}
.menu.current {
  border: 1px solid #666;
  border-bottom: 0;
  border-radius: 3px 3px 0 0;
  background: #353535;
}
.open {
  position: relative;
}
.dropdown {
  position: absolute;
  z-index: 5;
  top: 100%;
  left: 0;
  width: 249px;
  padding: 2px 1px;
  border: 1px solid #989898;
  background: #f0f0f0;
  box-shadow: 3px 3px 3px rgba(0, 0, 0, 0.4);
  color: #000;
  font-size: 14px;
}
.group + .group {
  padding-top: 5px;
  margin-top: 5px;
  border-top: 1px solid #bdbdbd;
}
.item {
  width: 100%;
  height: 23px;
  justify-content: flex-start;
}
.item:disabled {
  color: #7c7c7c;
}
.tick {
  width: 22px;
  padding-left: 5px;
}
.label {
  flex: 1;
  text-align: left;
}
.key {
  padding-right: 20px;
}
.sub {
  margin-right: 7px;
}
.winctl {
  display: flex;
  height: 24px;
  margin: 0 4px 0 auto;
  border: 1px solid #636363;
  border-top: 0;
  border-radius: 0 0 4px 4px;
  color: #b8b8b8;
}
.winctl button {
  width: 34px;
}
.winctl button + button {
  border-left: 1px solid #636363;
}
.winctl .wide {
  width: 58px;
}

/* options bar */
.options {
  display: flex;
  flex: none;
  align-items: center;
  height: 43px;
  border-bottom: 1px solid #383838;
}
.og {
  display: flex;
  align-items: center;
  gap: 8px;
  height: 28px;
  padding: 0 9px;
  border-right: 1px solid #3f3f3f;
}
.og.last {
  gap: 14px;
  border: 0;
}
.og.home {
  width: 67px;
  gap: 16px;
  padding-left: 6px;
}
.vgrip {
  width: 3px;
  height: 24px;
  background: repeating-linear-gradient(#3c3c3c 0 1px, transparent 1px 3px);
}
.og.brushes {
  width: 62px;
  gap: 11px;
  padding-left: 11px;
}
.og.tip {
  width: 110px;
  gap: 15px;
  padding-left: 19px;
}
.size {
  flex-direction: column;
  line-height: 14px;
  gap: 4px;
}
.size svg {
  color: #fff;
}
.og.mode {
  width: 553px;
}
.og.smooth {
  width: 189px;
  padding-left: 11px;
}
.og.angle {
  width: 82px;
  gap: 5px;
}
.gear {
  margin-left: 6px;
  position: relative;
}
.gear::after {
  content: "";
  position: absolute;
  right: -4px;
  bottom: -3px;
  border: 3px solid transparent;
  border-top-color: #fff;
  border-bottom: 0;
}
.field {
  height: 24px;
  padding: 0 9px;
  border: 1px solid #666;
  border-radius: 3px;
  background: #454545 url("data:image/svg+xml,%3Csvg xmlns='http://www.w3.org/2000/svg' width='9' height='6'%3E%3Cpath d='M.5 .8l4 4 4-4' fill='none' stroke='%23bbb' stroke-width='1.300'/%3E%3C/svg%3E") no-repeat right 4px center;
  appearance: none;
}
.field.grow {
  flex: 1;
}
.field.angle-in {
  width: 45px;
  height: 21px;
  padding: 0 6px;
  background: #454545;
  font-size: 13px;
}
.combo {
  display: flex;
  flex: none;
  width: 62px;
  height: 21px;
  border: 1px solid #666;
  border-radius: 3px;
  background: #454545;
}
.combo input {
  flex: 1;
  padding: 0 0 2px 4px;
  border: 0;
  background: none;
  font-size: 13px;
}
.combo button {
  width: 18px;
  border-left: 1px solid #666;
  color: #bbb;
}
.toggle {
  width: 30px;
  height: 31px;
  border: 1px solid #2f2f2f;
  border-radius: 3px;
  background: #363636;
}
.right-tools {
  display: flex;
  align-items: center;
  gap: 14px;
  margin-left: auto;
  padding-right: 11px;
}

/* workspace */
.work {
  display: flex;
  flex: 1;
  min-height: 0;
  background: #383838;
  border-bottom: 1px solid #383838;
}
.strip {
  display: flex;
  align-items: center;
  height: 14px;
  padding: 0 8px;
  background: #424242;
}
.strip.end {
  justify-content: flex-end;
}
.hgrip {
  width: 25px;
  height: 5px;
  margin: 0 auto;
  background: repeating-linear-gradient(90deg, #3e3e3e 0 1px, transparent 1px 3px);
}
.toolbar {
  display: flex;
  flex-direction: column;
  flex: none;
  width: 48px;
  padding: 0 1px;
}
.toolbody {
  flex: 1;
  margin-top: 1px;
  padding-top: 4px;
  background: #535353;
}
.tools {
  display: grid;
  grid-auto-rows: 1fr;
  height: 715px;
  margin-top: 12px;
}
.tool {
  position: relative;
  width: 38px;
  height: 32px;
  margin: 0 auto;
  border-radius: 2px;
}
.tool.sel {
  background: #363636;
}
.tool.fly::after {
  content: "";
  position: absolute;
  right: 3px;
  bottom: 5px;
  border: 2px solid transparent;
  border-right-color: #ccc;
  border-bottom-color: #ccc;
}
.mini {
  display: flex;
  justify-content: space-between;
  align-items: center;
  height: 26px;
  padding: 0 7px 0 5px;
}
.swatches {
  position: relative;
  width: 36px;
  height: 37px;
  margin: 0 0 6px 4px;
}
.swatches button {
  position: absolute;
  width: 24px;
  height: 24px;
  border: 1px solid #333;
  box-shadow: inset 0 0 0 1px #fff;
}
.swatches .fg {
  left: 0;
  top: 0;
  background: #41130f;
}
.swatches .bg {
  right: 0;
  bottom: 1px;
  background: #ffffcc;
}
.document {
  display: flex;
  flex-direction: column;
  flex: 1;
  min-width: 0;
  margin: 0 2px;
}
.tabs {
  display: flex;
  height: 35px;
  border-bottom: 1px solid #383838;
  background: #424242;
}
.doctab {
  gap: 9px;
  padding: 2px 13px 0;
  overflow: hidden;
  border-right: 1px solid #3a3a3a;
  color: #a3a3a3;
  font-size: 13px;
  font-weight: 700;
}
.doctab.cloud {
  width: 360px;
  gap: 7px;
  justify-content: flex-start;
}
.doctab.cloud svg {
  color: #bbb;
}
.doctab.active {
  width: 339px;
  gap: 10px;
  justify-content: flex-end;
  background: #535353;
  color: #fff;
}
.doctab.active svg {
  color: #aaa;
}
.doctab.wide {
  width: 269px;
}
.doctab.short {
  width: 215px;
}
.stage {
  display: grid;
  flex: 1;
  min-height: 0;
  grid-template-columns: 22px 1fr 21px;
  grid-template-rows: 22px 1fr;
}
.corner {
  border-right: 1px dotted #777;
  border-bottom: 1px dotted #777;
  background: #535353;
}
.hruler {
  display: flex;
  overflow: hidden;
  background: #484848;
  color: #a0a0a0;
  font-size: 13px;
  line-height: 26px;
}
.hruler .first {
  flex: none;
  width: 43px;
}
.hruler .cell {
  flex: 48 1 0;
  min-width: 0;
  padding-left: 2px;
  border-left: 1px solid #777;
  background:
    linear-gradient(#777, #777) 24% 100% / 1px 3px no-repeat,
    linear-gradient(#777, #777) 49% 100% / 1px 6px no-repeat,
    linear-gradient(#777, #777) 75% 100% / 1px 3px no-repeat;
}
.hruler .cell:last-child {
  flex-grow: 41;
  overflow: hidden;
}
.vruler {
  display: flex;
  flex-direction: column;
  overflow: hidden;
  background: #484848;
  color: #a0a0a0;
  font-size: 13px;
}
.vruler .lead {
  flex: none;
  height: 13px;
}
.vruler .cell {
  display: flex;
  flex: none;
  flex-direction: column;
  height: 48px;
  padding: 2px 0 0 3px;
  border-top: 1px solid #777;
  background:
    linear-gradient(#777, #777) 100% 24% / 3px 1px no-repeat,
    linear-gradient(#777, #777) 100% 49% / 6px 1px no-repeat,
    linear-gradient(#777, #777) 100% 75% / 3px 1px no-repeat;
  line-height: 15px;
}
.vruler b {
  font-weight: 400;
}
.canvas {
  position: relative;
  background: #282828;
}
.paper {
  position: absolute;
  left: 571px;
  top: 253px;
  width: 335px;
  height: 370px;
  background: #fff;
}
.stroke {
  position: absolute;
  left: 64px;
  top: 56px;
}
.vscroll {
  display: flex;
  grid-row: 1 / 3;
  grid-column: 3;
  flex-direction: column;
  align-items: center;
  padding: 10px 0;
  background: #4a4a4a;
  color: #8a8a8a;
}
.vscroll .thumb {
  width: 14px;
  height: 400px;
  margin: 233px 0 auto;
  border-radius: 2px;
  background: #696969;
}
.status {
  display: flex;
  height: 21px;
  line-height: 20px;
  background: #4a4a4a;
}
.pct {
  width: 61px;
  padding-left: 8px;
  background: #454545;
  color: #e6e6e6;
  font-size: 13px;
}
.dims {
  width: 212px;
  padding-left: 36px;
  background: #535353;
  line-height: 22px;
}
.more {
  width: 18px;
  border-right: 1px solid #3c3c3c;
}
.hscroll {
  display: flex;
  flex: 1;
  align-items: center;
  padding: 0 30px 0 10px;
  color: #8a8a8a;
}
.track {
  flex: 1;
  margin: 0 4px;
}
.track i {
  width: 48%;
  height: 14px;
  margin-left: 26%;
  background: #696969;
}

/* icon dock */
.dock {
  display: flex;
  flex-direction: column;
  flex: none;
  width: 47px;
}
.dock .strip {
  padding-right: 7px;
}
.dockgroup {
  display: flex;
  flex-direction: column;
  align-items: center;
  margin-top: 1px;
  padding: 5px 0 4px;
  background: #535353;
}
.dockgroup button {
  height: 36px;
}
.dockrest {
  flex: 1;
  margin-top: 1px;
  background: #535353;
}

/* panels */
.panels {
  display: flex;
  flex: none;
  flex-direction: column;
  width: 299px;
  padding: 0 2px 0 3px;
}
.panels > .strip {
  margin-left: -3px;
}
.panel {
  margin-top: 1px;
  background: #535353;
}
.ptabs {
  display: flex;
  height: 35px;
  background: #424242;
  color: #a3a3a3;
  font-weight: 600;
}
.ptabs button {
  padding: 0 10px 3px 11px;
  border-right: 1px solid #383838;
  border-bottom: 1px solid #383838;
}
.ptabs .active {
  border-bottom: 0;
  background: #535353;
  color: #fff;
}
.color .ptabs button {
  padding-right: 4px;
}
.color .ptabs .active {
  padding-right: 9px;
}
.color .ptabs .clip {
  width: 57px;
  overflow: hidden;
  justify-content: flex-start;
  padding-right: 0;
}
.pmenu {
  display: flex;
  flex: 1;
  align-items: center;
  justify-content: flex-end;
  padding: 0 6px 2px 0;
  border-bottom: 1px solid #383838;
  color: #bbb;
}
.color {
  height: 338px;
}
.colorbody {
  display: flex;
  padding: 8px 0 0 12px;
}
.colorbody .swatches {
  height: 38px;
  margin: 4px 8px 0 0;
}
.ring .fg {
  outline: 2px solid #8c8c8c;
}
.field2d {
  position: relative;
  width: 173px;
  height: 266px;
  background: linear-gradient(transparent, #000), linear-gradient(90deg, #fff, #ff1a00);
}
.pick {
  position: absolute;
  left: 76%;
  top: 74%;
  width: 14px;
  height: 14px;
  margin: -7px;
  border: 1px solid #fff;
  border-radius: 50%;
}
.huebar {
  position: relative;
  width: 24px;
  height: 266px;
  margin-left: 21px;
  background: linear-gradient(#f00, #f0f 17%, #00f 33%, #0ff 50%, #0f0 67%, #ff0 83%, #f00);
}
.huebar input {
  width: 100%;
  height: 100%;
  margin: 0;
  opacity: 0;
}
.pointer {
  position: absolute;
  left: -11px;
  bottom: -1px;
}
.adjust {
  height: 193px;
  margin-top: 2px;
}
.adjust p {
  margin: 7px 0 6px 12px;
}
.adjgrid {
  width: 259px;
}
.adjrow {
  display: flex;
  justify-content: center;
  height: 34px;
}
.adjrow button {
  width: 30px;
  height: 18px;
}
.layers {
  display: flex;
  flex: 1;
  flex-direction: column;
  min-height: 0;
  margin-top: 2px;
}
.lrow {
  display: flex;
  align-items: center;
  height: 39px;
  padding: 7px 7px 0 5px;
  border-bottom: 1px solid #434343;
}
.lrow + .lrow {
  height: 35px;
  padding-top: 4px;
}
.lrow.lrow.locks {
  height: 38px;
  padding-top: 0;
  border: 0;
}
.kind {
  position: relative;
  width: 108px;
}
.kind svg {
  position: absolute;
  left: 10px;
  top: 6px;
  width: 12px;
  height: 12px;
}
.kind .field {
  width: 100%;
  padding-left: 27px;
}
.filters {
  display: flex;
  flex: 1;
  padding-left: 8px;
}
.filters button {
  width: 30px;
  height: 22px;
}
.switch {
  width: 10px;
  height: 22px;
  margin: 0;
  border: 1px solid #3d3d3d;
  border-radius: 5px;
  background: radial-gradient(circle at 4px 4px, #ddd 4px, #484848 5px);
  appearance: none;
}
.blend {
  width: 161px;
}
.lrow label {
  margin: 0 5px 0 auto;
}
.locklabel {
  width: 38px;
  padding-left: 3px;
}
.lockbtns {
  display: flex;
}
.lockbtns button {
  width: 27px;
  height: 22px;
}
.lockbtns svg {
  height: 16px;
  max-width: 17px;
}
.list {
  flex: 1;
  border-right: 20px solid #4a4a4a;
  background: #4d4d4d;
}
.layer {
  display: flex;
  height: 51px;
  border-bottom: 1px solid #434343;
  background: #535353;
}
.eye {
  width: 38px;
  border-right: 1px solid #434343;
}
.info {
  display: flex;
  flex: 1;
  align-items: center;
  gap: 13px;
  padding: 0 20px 0 4px;
}
.on .info {
  background: #6a6a6a;
}
.info em,
.info span {
  color: #ececec;
}
.lk {
  margin-left: auto;
}
.list .thumb {
  display: flex;
  align-items: center;
  justify-content: center;
  width: 37px;
  height: 40px;
  border: 1px solid #333;
}
.list .thumb i {
  width: 22px;
  height: 24px;
  background: #fff;
}
.list .thumb .checker {
  background: repeating-conic-gradient(#ccc 0 25%, #fff 0 50%) 0 0 / 6px 6px;
}
.corners {
  position: relative;
}
.corners::before {
  content: "";
  position: absolute;
  inset: -3px;
  background:
    linear-gradient(#fff, #fff) 0 0 / 15px 1px,
    linear-gradient(#fff, #fff) 100% 0 / 12px 1px,
    linear-gradient(#fff, #fff) 0 100% / 15px 1px,
    linear-gradient(#fff, #fff) 100% 100% / 12px 1px,
    linear-gradient(#fff, #fff) 0 0 / 1px 15px,
    linear-gradient(#fff, #fff) 100% 0 / 1px 15px,
    linear-gradient(#fff, #fff) 0 100% / 1px 13px,
    linear-gradient(#fff, #fff) 100% 100% / 1px 13px;
  background-repeat: no-repeat;
}
.lfoot {
  display: flex;
  height: 31px;
  padding-left: 32px;
  border-top: 1px solid #434343;
}
.lfoot button {
  position: relative;
  width: 34px;
}
.dim {
  color: #858585;
}
.fx {
  font-size: 16px;
  font-style: italic;
}
.drop::after {
  content: "";
  position: absolute;
  right: 6px;
  bottom: 6px;
  border: 2px solid transparent;
  border-top-color: #fff;
  border-bottom: 0;
}

/* taskbar */
.taskbar {
  display: flex;
  flex: none;
  height: 50px;
  background: linear-gradient(90deg, #3a2c3a 0, #3a2236 25%, #3a2734 28%, #3d281f 31%, #402a24 42%, #3a2352 46%, #3c2854 55%, #3a2844 60%, #33222e 66%, #3c1f28 69%, #2b2027 76%, #2c1f26 100%);
  color: #fff;
}
.start {
  width: 60px;
}
.find {
  display: flex;
  align-items: center;
  gap: 13px;
  width: 430px;
  margin-top: 1px;
  padding-left: 15px;
  background: #f2f2f2;
  color: #222;
}
.find input {
  flex: 1;
  padding: 0;
  border: 0;
  background: none;
  color: #222;
  font-size: 18px;
}
.find input::placeholder {
  color: #2b2b2b;
  opacity: 1;
}
.task {
  width: 62px;
}
.an,
.psd {
  border-right: 1px solid #3a2352;
}
.an {
  border-bottom: 3px solid #ff7a10;
  background: #b56328;
}
.psd {
  border-bottom: 3px solid #76b9ed;
  background: #655450;
}
.an span,
.psd span {
  width: 28px;
  height: 27px;
  border-radius: 5px;
  font-size: 15px;
  font-weight: 600;
  line-height: 25px;
}
.an span {
  background: #00005b;
  color: #9a9aff;
}
.psd span {
  background: #001e36;
  color: #31a8ff;
}
.run {
  background: linear-gradient(#76b9ed, #76b9ed) 50% 100% / 51px 3px no-repeat;
}
.tray {
  display: flex;
  align-items: center;
  gap: 12px;
  margin-left: auto;
  padding-right: 22px;
}
.help {
  position: relative;
  width: 27px;
  height: 27px;
  border: 2px solid #fff;
  border-radius: 50%;
  background: #1489c4;
  font-size: 18px;
  font-weight: 700;
  line-height: 22px;
  text-align: center;
}
.help i {
  position: absolute;
  right: -3px;
  bottom: -3px;
  width: 11px;
  height: 11px;
  border-radius: 50%;
  background: #1aa0dc;
  font-size: 9px;
  line-height: 10px;
}
.clock {
  display: flex;
  flex-direction: column;
  justify-content: center;
  width: 70px;
  font-size: 14px;
  line-height: 23px;
  text-align: center;
}
.notes {
  position: relative;
  width: 73px;
  padding-left: 2px;
  border-right: 5px solid transparent;
}
.notes b {
  position: absolute;
  left: 31px;
  top: 25px;
  width: 20px;
  height: 20px;
  border: 1px solid #8a8a8a;
  border-radius: 50%;
  background: #33282e;
  font-size: 12px;
  font-weight: 400;
  line-height: 18px;
}
</style>
